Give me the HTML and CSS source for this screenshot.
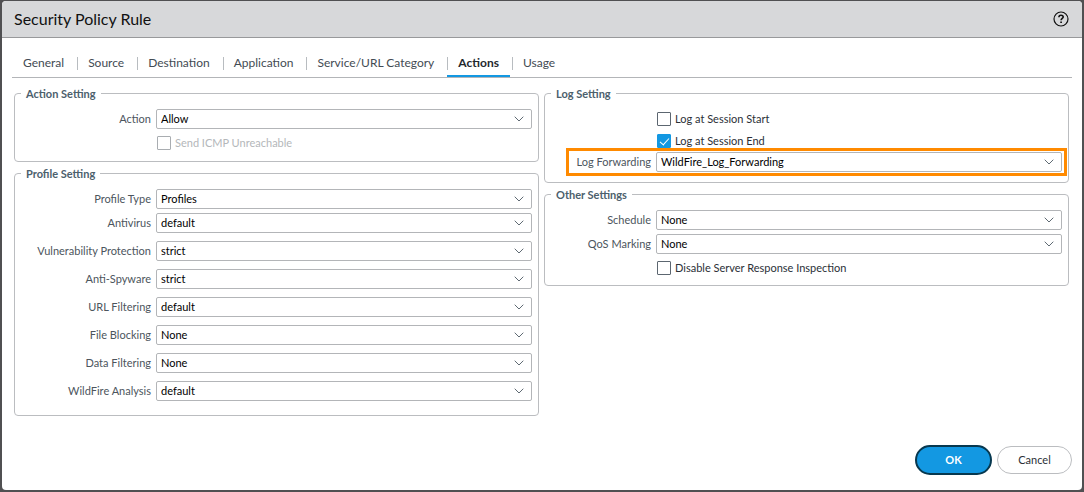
FILE: index.html
```html
<!DOCTYPE html>
<html lang="en">
<head>
<meta charset="utf-8">
<title>Security Policy Rule</title>
<link rel="stylesheet" href="styles.css">
</head>
<body>
<svg class="defs" aria-hidden="true">
  <symbol id="chevron" viewBox="0 0 10 6"><path d="M.7 .7 5 5 9.300 .7" fill="none" stroke="currentColor" stroke-width="1"/></symbol>
</svg>
<main class="dialog" role="dialog" aria-labelledby="dialog-title">
  <header class="dialog-header">
    <h1 class="dialog-title" id="dialog-title">Security Policy Rule</h1>
    <button class="help" type="button" aria-label="Help">
      <svg viewBox="0 0 16 16" width="16" height="16" fill="none" stroke="#111"><circle cx="8" cy="8" r="7" stroke-width="1.2"/><path d="M5.900 6.300C5.900 4.900 6.800 4.200 8 4.200S10.200 4.900 10.200 6C10.200 7.400 8.100 7.500 8.100 9.300" stroke-width="1.6"/><path d="M8.100 10.400v1.700" stroke-width="1.700"/></svg>
    </button>
  </header>

  <nav class="tabs">
    <a class="tab" href="#general">General</a>
    <a class="tab" href="#source">Source</a>
    <a class="tab" href="#destination">Destination</a>
    <a class="tab" href="#application">Application</a>
    <a class="tab" href="#service">Service/URL Category</a>
    <a class="tab active" href="#actions" aria-current="page">Actions</a>
    <a class="tab" href="#usage">Usage</a>
  </nav>

  <form class="form">
    <div class="columns">
      <div class="column">
        <fieldset class="panel">
          <legend>Action Setting</legend>
          <div class="field">
            <label for="action">Action</label>
            <div class="picker"><select id="action"><option>Allow</option></select><svg class="chevron"><use href="#chevron"/></svg></div>
          </div>
          <div class="check disabled">
            <input type="checkbox" id="icmp" disabled><label for="icmp">Send ICMP Unreachable</label>
          </div>
        </fieldset>

        <fieldset class="panel profile">
          <legend>Profile Setting</legend>
          <div class="field">
            <label for="ptype">Profile Type</label>
            <div class="picker"><select id="ptype"><option>Profiles</option></select><svg class="chevron"><use href="#chevron"/></svg></div>
          </div>
          <div class="profiles">
            <div class="field">
              <label for="av">Antivirus</label>
              <div class="picker"><select id="av"><option>default</option></select><svg class="chevron"><use href="#chevron"/></svg></div>
            </div>
            <div class="field">
              <label for="vuln">Vulnerability Protection</label>
              <div class="picker"><select id="vuln"><option>strict</option></select><svg class="chevron"><use href="#chevron"/></svg></div>
            </div>
            <div class="field">
              <label for="spy">Anti-Spyware</label>
              <div class="picker"><select id="spy"><option>strict</option></select><svg class="chevron"><use href="#chevron"/></svg></div>
            </div>
            <div class="field">
              <label for="url">URL Filtering</label>
              <div class="picker"><select id="url"><option>default</option></select><svg class="chevron"><use href="#chevron"/></svg></div>
            </div>
            <div class="field">
              <label for="file">File Blocking</label>
              <div class="picker"><select id="file"><option>None</option></select><svg class="chevron"><use href="#chevron"/></svg></div>
            </div>
            <div class="field">
              <label for="data">Data Filtering</label>
              <div class="picker"><select id="data"><option>None</option></select><svg class="chevron"><use href="#chevron"/></svg></div>
            </div>
            <div class="field">
              <label for="wf">WildFire Analysis</label>
              <div class="picker"><select id="wf"><option>default</option></select><svg class="chevron"><use href="#chevron"/></svg></div>
            </div>
          </div>
        </fieldset>
      </div>

      <div class="column wide-value">
        <fieldset class="panel log">
          <legend>Log Setting</legend>
          <div class="check">
            <input type="checkbox" id="start"><label for="start">Log at Session Start</label>
          </div>
          <div class="check">
            <input type="checkbox" id="end" checked><label for="end">Log at Session End</label>
          </div>
          <div class="field highlight">
            <label for="fwd">Log Forwarding</label>
            <div class="picker"><select id="fwd"><option>WildFire_Log_Forwarding</option></select><svg class="chevron"><use href="#chevron"/></svg></div>
          </div>
        </fieldset>

        <fieldset class="panel other">
          <legend>Other Settings</legend>
          <div class="field">
            <label for="sched">Schedule</label>
            <div class="picker"><select id="sched"><option>None</option></select><svg class="chevron"><use href="#chevron"/></svg></div>
          </div>
          <div class="field">
            <label for="qos">QoS Marking</label>
            <div class="picker"><select id="qos"><option>None</option></select><svg class="chevron"><use href="#chevron"/></svg></div>
          </div>
          <div class="check">
            <input type="checkbox" id="dsri"><label for="dsri">Disable Server Response Inspection</label>
          </div>
        </fieldset>
      </div>
    </div>

    <footer class="actions">
      <button class="btn primary" type="button">OK</button>
      <button class="btn" type="button">Cancel</button>
    </footer>
  </form>
</main>
</body>
</html>
```
FILE: styles.css
```css
*, *::before, *::after { box-sizing: border-box; }

body {
  margin: 0;
  min-height: 100vh;
  padding: 1px 2px 2px;
  display: flex;
  background: #505052;
  font: 11px/16px Lato, "Liberation Sans", sans-serif;
  color: #2b3037;
}

button, select { font: inherit; }

.defs { position: absolute; width: 0; height: 0; }

.dialog {
  flex: 1;
  display: flex;
  flex-direction: column;
  background: #fff;
  border-radius: 4px;
  overflow: hidden;
}

.dialog-header {
  display: flex;
  align-items: center;
  justify-content: space-between;
  height: 37px;
  padding: 0 13px 0 12px;
  background: #d7d8da;
  border-bottom: 1px solid #98999b;
}

.dialog-title {
  margin: 0;
  font-size: 16px;
  line-height: 20px;
  font-weight: 400;
  color: #111;
}

.help {
  display: flex;
  padding: 0;
  border: 0;
  border-radius: 50%;
  background: none;
}

.tabs {
  display: flex;
  margin: 12px 10px 0;
  height: 28px;
  border-bottom: 1px solid #b3b5b8;
}

.tab {
  position: relative;
  padding: 5px 13px 0 11px;
  font-size: 12px;
  color: #434b53;
  text-decoration: none;
}

.tab + .tab::before {
  content: "";
  position: absolute;
  left: 0;
  top: 7px;
  width: 1px;
  height: 13px;
  background: #b8bcc0;
}

.tab.active { color: #23282d; font-weight: 700; }

.tab.active::after {
  content: "";
  position: absolute;
  left: 0;
  right: 2px;
  bottom: 0;
  height: 2px;
  background: #1398e2;
}

.form {
  flex: 1;
  display: flex;
  flex-direction: column;
  justify-content: space-between;
  padding: 8px 10px 15px 12px;
}

.columns {
  display: grid;
  grid-template-columns: 1fr 1fr;
  gap: 5px;
  padding-right: 3px;
}

.column {
  --label: 136px;
  display: flex;
  flex-direction: column;
  gap: 4px;
}

.column.wide-value { --label: 106px; }

.panel {
  display: flex;
  flex-direction: column;
  gap: 4px;
  min-width: 0;
  margin: 0;
  padding: 8px 6px 8px 0;
  border: 1px solid #bbbdc0;
  border-radius: 4px;
}

.panel legend {
  margin-left: 6px;
  padding: 0 5px;
  line-height: 15px;
  font-weight: 700;
  color: #4c606c;
}

.panel.profile { padding-bottom: 14px; }
.profiles { display: flex; flex-direction: column; gap: 8px; }
.panel.log { gap: 0; padding-top: 7px; padding-bottom: 10px; }
.panel.log .check { height: 22px; }
.panel.other { padding-bottom: 7px; }

.field {
  position: relative;
  display: grid;
  grid-template-columns: var(--label) 1fr;
  gap: 5px;
  align-items: center;
}

.field > label { text-align: right; color: #4c555d; }

.picker { display: grid; align-items: center; }

.picker select {
  grid-area: 1 / 1;
  appearance: none;
  width: 100%;
  height: 20px;
  padding: 0 24px 0 4px;
  border: 1px solid #b3b5b8;
  border-radius: 2px;
  background: #fff;
  color: #000;
}

.chevron {
  grid-area: 1 / 1;
  justify-self: end;
  width: 10px;
  height: 6px;
  margin-right: 8px;
  color: #5f6a73;
  pointer-events: none;
}

.check {
  display: flex;
  align-items: center;
  gap: 4px;
  height: 20px;
  padding-left: calc(var(--label) + 6px);
}

.check input {
  appearance: none;
  width: 14px;
  height: 14px;
  margin: 0;
  border: 1px solid #5c6670;
  border-radius: 1px;
  background: #fff;
}

.check input:checked {
  display: grid;
  place-items: center;
  border-color: #1398e2;
  background: #1398e2;
}

.check input:checked::before {
  content: "";
  width: 5px;
  height: 9px;
  margin-bottom: 2px;
  border: solid #fff;
  border-width: 0 1px 1px 0;
  transform: rotate(42deg);
}

.check.disabled { color: #b4b7ba; }
.check.disabled input { border-color: #a9adb1; }

.highlight::after {
  content: "";
  position: absolute;
  inset: -4px -5px -4px 21px;
  border: 3px solid #ff8a00;
  pointer-events: none;
}

.actions {
  display: flex;
  justify-content: flex-end;
  align-items: center;
  gap: 5px;
}

.btn {
  width: 75px;
  height: 28px;
  padding: 0;
  border: 1px solid #bbbdc0;
  border-radius: 15px;
  background: #fff;
  color: #2b3037;
}

.btn.primary {
  width: 77px;
  height: 30px;
  border: 2px solid #07384f;
  background: #1398e2;
  color: #fff;
  font-weight: 700;
}
```
